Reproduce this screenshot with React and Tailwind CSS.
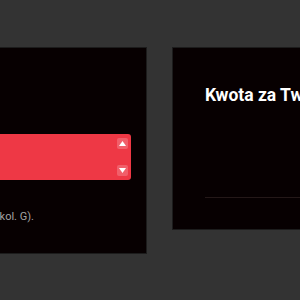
import React from 'react';

const Spin = ({ up }) => (
  <button className="w-[11px] h-[11px] rounded-[2px] bg-white/20 flex items-center justify-center">
    <svg width="7" height="5" viewBox="0 0 7 5">
      {up ? <path d="M0 5 L3.5 0 L7 5 Z" fill="#fff" /> : <path d="M0 0 L3.5 5 L7 0 Z" fill="#fff" />}
    </svg>
  </button>
);

export default function App() {
  return (
    <div className="w-[300px] h-[300px] overflow-hidden bg-[#333333]" style={{ fontFamily: 'Roboto, "Liberation Sans", sans-serif' }}>
      <div className="flex items-start gap-[25px] pt-[47px] -ml-[114px]">
        <div className="w-[261px] h-[207px] shrink-0 bg-[#070001] border border-[#1c1c1c] px-[15px] pt-[86px]">
          <div className="h-[46px] rounded-[3px] bg-[#ee3845] flex justify-end pr-[3px] py-[3px]">
            <div className="flex flex-col justify-between py-[1px]">
              <Spin up />
              <Spin />
            </div>
          </div>
          <p className="mt-[30px] ml-[2px] text-[11px] leading-[14px] text-[#a3a3a3] whitespace-nowrap">Wpisz kwotę z PIT (kol. G).</p>
        </div>
        <div className="w-[200px] h-[183px] shrink-0 bg-[#070001] border border-[#1c1c1c] pl-[32px] pt-[36px]">
          <h2 className="text-[17.5px] leading-[22px] font-bold text-white whitespace-nowrap">Kwota za Twój rok</h2>
          <div className="mt-[91px] h-px bg-[#241818]"></div>
        </div>
      </div>
    </div>
  );
}
